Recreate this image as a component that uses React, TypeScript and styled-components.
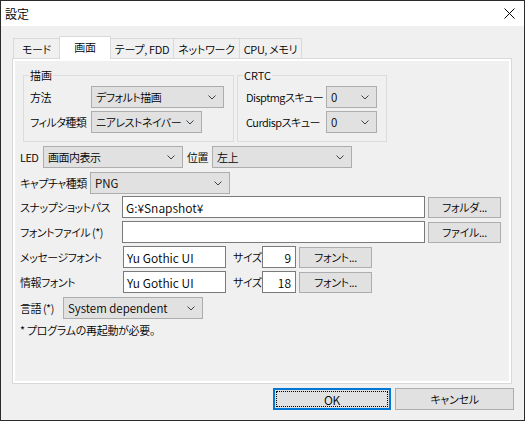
import React from 'react';
import styled, { createGlobalStyle } from 'styled-components';

const GlobalStyle = createGlobalStyle`
  html, body {
    margin: 0;
    padding: 0;
    background: #f0f0f0;
  }
  body {
    font-family: "Noto Sans CJK JP", "Noto Sans", sans-serif;
    font-size: 11px;
    font-weight: 350;
    color: #000;
    font-feature-settings: "palt";
  }
  * {
    box-sizing: border-box;
  }
`;

const Window = styled.div`
  width: 525px;
  height: 421px;
  border: 1px solid #2b2b2b;
  background: #f0f0f0;
  display: flex;
  flex-direction: column;
`;

const TitleBar = styled.div`
  height: 25px;
  flex-shrink: 0;
  background: #fff;
  display: flex;
  align-items: center;
  justify-content: space-between;
  padding: 0 9px 0 4px;
`;

const Title = styled.span`
  font-size: 12px;
  line-height: 16px;
`;

const Body = styled.div`
  flex: 1;
  display: flex;
  flex-direction: column;
  padding: 10px 12px 0 11px;
`;

const TabStrip = styled.div`
  display: flex;
  align-items: flex-end;
  height: 23px;
  padding-left: 1px;
  position: relative;
  z-index: 1;
`;

const Tab = styled.div<{ $active?: boolean; $w: number }>`
  width: ${({ $w }) => $w}px;
  height: ${({ $active }) => ($active ? 23 : 20)}px;
  margin-bottom: ${({ $active }) => ($active ? 0 : 1)}px;
  border: 1px solid #d9d9d9;
  border-bottom: none;
  background: ${({ $active }) => ($active ? '#fff' : '#f0f0f0')};
  display: flex;
  align-items: center;
  justify-content: center;
  padding-bottom: ${({ $active }) => ($active ? 2 : 0)}px;
  white-space: nowrap;
  letter-spacing: -0.3px;
  & + & {
    margin-left: -1px;
  }
`;

const Panel = styled.div`
  margin-top: -1px;
  width: 500px;
  height: 326px;
  border: 1px solid #d9d9d9;
  background: #fff;
  padding: 2px;
`;

const PanelInner = styled.div`
  height: 100%;
  background: #f0f0f0;
  padding-left: 5px;
  display: flex;
  flex-direction: column;
`;

const GroupsRow = styled.div`
  display: flex;
  gap: 3px;
  margin: 14px 0 0 3px;
`;

const Group = styled.div<{ $w: number; $pl: number }>`
  position: relative;
  width: ${({ $w }) => $w}px;
  height: 67px;
  border: 1px solid #dcdcdc;
  padding: 10px 0 0 ${({ $pl }) => $pl}px;
  display: flex;
  flex-direction: column;
  gap: 3px;
`;

const Legend = styled.span`
  position: absolute;
  top: -9px;
  left: 5px;
  padding: 0 1px;
  background: #f0f0f0;
  line-height: 16px;
`;

const Row = styled.div<{ $mt?: number }>`
  display: flex;
  align-items: center;
  height: 22px;
  flex-shrink: 0;
  margin-top: ${({ $mt = 0 }) => $mt}px;
`;

const Label = styled.span<{ $w: number; $ml?: number }>`
  width: ${({ $w }) => $w}px;
  margin-left: ${({ $ml = 0 }) => $ml}px;
  flex-shrink: 0;
  white-space: nowrap;
  line-height: 22px;
  letter-spacing: -0.5px;
`;

const ComboBox = styled.div<{ $w: number }>`
  width: ${({ $w }) => $w}px;
  height: 22px;
  flex-shrink: 0;
  border: 1px solid #adadad;
  background: #e1e1e1;
  display: flex;
  align-items: center;
  justify-content: space-between;
  padding: 0 7px 0 4px;
  white-space: nowrap;
  overflow: hidden;
`;

const ComboText = styled.span<{ $jp?: boolean }>`
  font-size: ${({ $jp }) => ($jp ? '11px' : '11.5px')};
  letter-spacing: ${({ $jp }) => ($jp ? '-0.5px' : '0')};
`;

const TextBox = styled.div<{ $w: number; $right?: boolean }>`
  width: ${({ $w }) => $w}px;
  height: 22px;
  flex-shrink: 0;
  border: 1px solid #7a7a7a;
  background: #fff;
  display: flex;
  align-items: center;
  justify-content: ${({ $right }) => ($right ? 'flex-end' : 'flex-start')};
  padding: 0 4px 0 3px;
  white-space: nowrap;
  font-size: 12px;
`;

const Button = styled.div<{ $w: number; $h?: number; $ml?: number; $default?: boolean }>`
  position: relative;
  width: ${({ $w }) => $w}px;
  height: ${({ $h = 21 }) => $h}px;
  margin-left: ${({ $ml = 0 }) => $ml}px;
  flex-shrink: 0;
  border: ${({ $default }) => ($default ? '2px solid #0078d7' : '1px solid #adadad')};
  background: #e1e1e1;
  display: flex;
  align-items: center;
  justify-content: center;
  white-space: nowrap;
  letter-spacing: -0.3px;
  ${({ $default }) =>
    $default &&
    `
    font-size: 12px;
    &::after {
      content: '';
      position: absolute;
      inset: 1px;
      border: 1px dotted #000;
    }
  `}
`;

const Note = styled.div`
  margin-top: 3px;
  line-height: 16px;
  letter-spacing: -0.3px;
`;

const Footer = styled.div`
  display: flex;
  justify-content: flex-end;
  gap: 4px;
  margin: 4px -2px 0 0;
`;

const Chevron = () => (
  <svg width="8" height="5" viewBox="0 0 8 5">
    <polyline points="0.5,0.5 4,4 7.5,0.5" fill="none" stroke="#404040" strokeWidth="1" />
  </svg>
);

const CloseIcon = () => (
  <svg width="11" height="11" viewBox="0 0 11 11">
    <path d="M0.5 0.5 L10.5 10.5 M10.5 0.5 L0.5 10.5" stroke="#000" strokeWidth="1" />
  </svg>
);

const Combo = ({ w, value, jp }: { w: number; value: string; jp?: boolean }) => (
  <ComboBox $w={w}>
    <ComboText $jp={jp}>{value}</ComboText>
    <Chevron />
  </ComboBox>
);

const tabs = [
  { label: 'モード', w: 47 },
  { label: '画面', w: 52, active: true },
  { label: 'テープ, FDD', w: 64 },
  { label: 'ネットワーク', w: 67 },
  { label: 'CPU, メモリ', w: 63 },
];

const App = () => (
  <>
    <GlobalStyle />
    <Window>
      <TitleBar>
        <Title>設定</Title>
        <CloseIcon />
      </TitleBar>
      <Body>
        <TabStrip>
          {tabs.map((t) => (
            <Tab key={t.label} $w={t.w} $active={t.active}>
              {t.label}
            </Tab>
          ))}
        </TabStrip>
        <Panel>
          <PanelInner>
            <GroupsRow>
              <Group $w={211} $pl={6}>
                <Legend>描画</Legend>
                <Row>
                  <Label $w={61}>方法</Label>
                  <Combo w={133} value="デフォルト描画" jp />
                </Row>
                <Row>
                  <Label $w={61}>フィルタ種類</Label>
                  <Combo w={111} value="ニアレストネイバー" jp />
                </Row>
              </Group>
              <Group $w={150} $pl={8}>
                <Legend>CRTC</Legend>
                <Row>
                  <Label $w={80}>Disptmgスキュー</Label>
                  <Combo w={51} value="0" />
                </Row>
                <Row>
                  <Label $w={80}>Curdispスキュー</Label>
                  <Combo w={51} value="0" />
                </Row>
              </Group>
            </GroupsRow>

            <Row $mt={4}>
              <Label $w={23}>LED</Label>
              <Combo w={140} value="画面内表示" jp />
              <Label $w={25} $ml={4}>位置</Label>
              <Combo w={140} value="左上" jp />
            </Row>
            <Row $mt={4}>
              <Label $w={70}>キャプチャ種類</Label>
              <Combo w={140} value="PNG" />
            </Row>
            <Row $mt={2}>
              <Label $w={102}>スナップショットパス</Label>
              <TextBox $w={303}>G:¥Snapshot¥</TextBox>
              <Button $w={73} $ml={3}>フォルダ...</Button>
            </Row>
            <Row $mt={3}>
              <Label $w={102}>フォントファイル (*)</Label>
              <TextBox $w={303} />
              <Button $w={73} $ml={3}>ファイル...</Button>
            </Row>
            <Row $mt={3}>
              <Label $w={103}>メッセージフォント</Label>
              <TextBox $w={103}>Yu Gothic UI</TextBox>
              <Label $w={29} $ml={7}>サイズ</Label>
              <TextBox $w={34} $right>9</TextBox>
              <Button $w={73} $ml={3}>フォント...</Button>
            </Row>
            <Row $mt={3}>
              <Label $w={103}>情報フォント</Label>
              <TextBox $w={103}>Yu Gothic UI</TextBox>
              <Label $w={29} $ml={7}>サイズ</Label>
              <TextBox $w={34} $right>18</TextBox>
              <Button $w={73} $ml={3}>フォント...</Button>
            </Row>
            <Row $mt={4}>
              <Label $w={43}>言語 (*)</Label>
              <Combo w={140} value="System dependent" />
            </Row>
            <Note>* プログラムの再起動が必要。</Note>
          </PanelInner>
        </Panel>
        <Footer>
          <Button $w={118} $h={22} $default>
            OK
          </Button>
          <Button $w={119} $h={22}>
            キャンセル
          </Button>
        </Footer>
      </Body>
    </Window>
  </>
);

export default App;
